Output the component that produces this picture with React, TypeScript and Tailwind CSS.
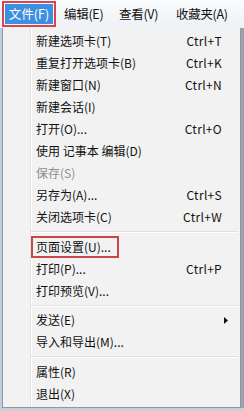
type Item =
  | { kind: "sep" }
  | { kind: "item"; label: string; shortcut?: string; disabled?: boolean; boxed?: boolean; submenu?: boolean };

const items: Item[] = [
  { kind: "item", label: "新建选项卡(T)", shortcut: "Ctrl+T" },
  { kind: "item", label: "重复打开选项卡(B)", shortcut: "Ctrl+K" },
  { kind: "item", label: "新建窗口(N)", shortcut: "Ctrl+N" },
  { kind: "item", label: "新建会话(I)" },
  { kind: "item", label: "打开(O)...", shortcut: "Ctrl+O" },
  { kind: "item", label: "使用 记事本 编辑(D)" },
  { kind: "item", label: "保存(S)", disabled: true },
  { kind: "item", label: "另存为(A)...", shortcut: "Ctrl+S" },
  { kind: "item", label: "关闭选项卡(C)", shortcut: "Ctrl+W" },
  { kind: "sep" },
  { kind: "item", label: "页面设置(U)...", boxed: true },
  { kind: "item", label: "打印(P)...", shortcut: "Ctrl+P" },
  { kind: "item", label: "打印预览(V)..." },
  { kind: "sep" },
  { kind: "item", label: "发送(E)", submenu: true },
  { kind: "item", label: "导入和导出(M)..." },
  { kind: "sep" },
  { kind: "item", label: "属性(R)" },
  { kind: "item", label: "退出(X)" },
];

const font = { fontFamily: '"Noto Sans CJK SC", "Noto Sans", sans-serif' };

export default function App() {
  return (
    <div className="w-[244px] h-[411px] bg-[#6b7480] overflow-hidden text-[12px] text-[#111]" style={font}>
      {/* menu bar */}
      <div className="h-[28px] bg-gradient-to-b from-[#fbfcfd] to-[#eef1f5] flex items-center pl-[2px] text-[12.5px]">
        <div className="w-[54px] h-[26px] border-2 border-[#d9454a] p-[1px] flex shrink-0">
          <div className="flex-1 bg-[#3d8fe0] text-white flex items-center justify-center leading-none">文件(F)</div>
        </div>
        <span className="ml-[8px] w-[55px] shrink-0 tracking-[-0.3px]">编辑(E)</span>
        <span className="w-[57px] shrink-0 tracking-[-0.3px]">查看(V)</span>
        <span className="shrink-0 tracking-[-0.3px]">收藏夹(A)</span>
      </div>

      {/* dropdown */}
      <div className="flex h-[380px]">
        <div className="w-[2px] bg-[#b9cde4]" />
        <div className="w-[239px] bg-[#f2f2f2] border border-[#979797] border-t-0 flex">
          <div className="w-[28px] shrink-0 border-r border-[#e2e3e3] shadow-[1px_0_0_#ffffff]" />
          <div className="flex-1 flex flex-col pt-[2px] pl-[5px] pr-[18px]">
            {items.map((it, i) =>
              it.kind === "sep" ? (
                <div key={i} className="h-[7.5px] flex items-center -ml-[5px] -mr-[16px]">
                  <div className="w-full border-t border-[#e0e0e0] shadow-[0_1px_0_#ffffff]" />
                </div>
              ) : (
                <div key={i} className="h-[22px] flex items-center justify-between">
                  <span
                    className={
                      (it.disabled ? "text-[#8d8d8d] " : "") +
                      (it.boxed ? "border-2 border-[#c8474b] -ml-[5px] pl-[3px] pr-[6px] h-[22px] flex items-center" : "")
                    }
                  >
                    {it.label}
                  </span>
                  {it.shortcut && <span className="tracking-[0.3px]">{it.shortcut}</span>}
                  {it.submenu && (
                    <svg width="4" height="7" viewBox="0 0 4 7" className="-mr-[6px]">
                      <path d="M0 0 L4 3.5 L0 7 Z" fill="#111" />
                    </svg>
                  )}
                </div>
              )
            )}
          </div>
        </div>
        <div className="flex-1 bg-[#9aa3ad]" />
      </div>
      <div className="h-[3px] bg-[#c9ced4]" />
    </div>
  );
}
